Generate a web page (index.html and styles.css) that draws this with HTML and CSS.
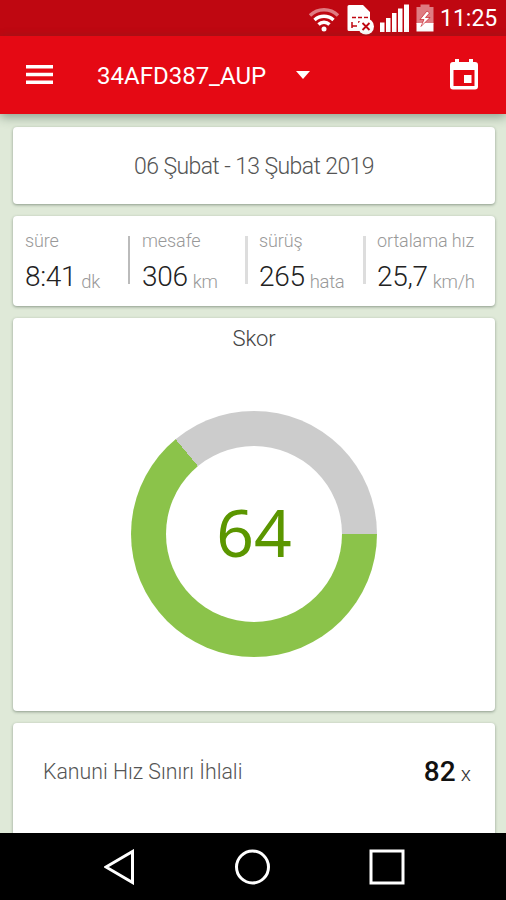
FILE: index.html
```html
<!DOCTYPE html>
<html lang="tr">
<head>
  <meta charset="UTF-8">
  <meta name="viewport" content="width=device-width, initial-scale=1.0">
  <title>Skor</title>
  <link rel="stylesheet" href="styles.css">
</head>
<body>

  <div class="status-bar">
    <svg class="status-icons" width="128" height="36" viewBox="0 0 128 36">
      <!-- wifi -->
      <g fill="none" stroke="#fff" stroke-width="3.4">
        <path d="M1 15.500a20 20 0 0 1 28 0" stroke="#df7c82"/>
        <path d="M5.500 20a14 14 0 0 1 19 0"/>
        <path d="M9.500 24.500a8 8 0 0 1 11 0"/>
      </g>
      <circle cx="15" cy="29" r="2.500" fill="#fff"/>
      <!-- sim -->
      <path d="M40 5h14l7 7v19H40a1.500 1.500 0 0 1-1.500-1.500v-23A1.500 1.500 0 0 1 40 5z" fill="#fff"/>
      <path d="M43 17.500h4M49 17.500h4M55 17.500h4M43 22v6M43 26h5M49 22h3" stroke="#bf0711" stroke-width="1.500" fill="none"/>
      <circle cx="57" cy="26.500" r="8" fill="#fff"/>
      <path d="M53.500 23l7 7M60.500 23l-7 7" stroke="#bf0711" stroke-width="1.800"/>
      <!-- signal -->
      <path d="M71 22.500h4.500V32H71zM77 18h4.500v14H77zM83 13h4.500v19H83zM89 8.500h4.500V32H89zM95 4.500h5V32h-5z" fill="#fff"/>
      <!-- battery -->
      <path d="M107.500 7h4V4.500h9V7h4v17h-17z" fill="#df7c82"/>
      <path d="M107.500 23h17v8.500h-17z" fill="#fff"/>
      <path d="M118 11l-7 8.500h4l-3 7 9-9h-4.500l4-4.500z" fill="#fff" stroke="#bf0711" stroke-width=".6"/>
    </svg>
    <span class="clock">11:25</span>
  </div>

  <header class="app-bar">
    <button class="icon-btn menu-btn" aria-label="Menü">
      <svg width="27" height="20" viewBox="0 0 27 20"><path d="M0 0h27v3.400H0zM0 7.800h27v3.400H0zM0 15.600h27V19H0z" fill="#fff"/></svg>
    </button>
    <h1>34AFD387_AUP</h1>
    <span class="caret"></span>
    <button class="icon-btn calendar-btn" aria-label="Tarih">
      <svg width="28" height="31" viewBox="0 0 28 31">
        <path fill="#fff" fill-rule="evenodd" d="M5 0h4v3h10V0h4v3h2a3 3 0 0 1 3 3v21.500a3 3 0 0 1-3 3H3a3 3 0 0 1-3-3V6a3 3 0 0 1 3-3h2zM3.500 11v16h21V11z"/>
        <path fill="#fff" d="M14 16h7.500v8H14z"/>
      </svg>
    </button>
  </header>

  <main class="content">
    <section class="card date-card">06 Şubat - 13 Şubat 2019</section>

    <section class="card stats">
      <div class="stat">
        <span class="label">süre</span>
        <div class="value"><span>8:41</span> <small>dk</small></div>
      </div>
      <div class="stat">
        <span class="label">mesafe</span>
        <div class="value"><span>306</span> <small>km</small></div>
      </div>
      <div class="stat">
        <span class="label">sürüş</span>
        <div class="value"><span>265</span> <small>hata</small></div>
      </div>
      <div class="stat">
        <span class="label">ortalama hız</span>
        <div class="value"><span>25,7</span> <small>km/h</small></div>
      </div>
    </section>

    <section class="card score-card">
      <h2>Skor</h2>
      <div class="donut">
        <div class="score">64</div>
      </div>
    </section>

    <section class="card violation">
      <span class="name">Kanuni Hız Sınırı İhlali</span>
      <span class="count"><b>82</b> x</span>
    </section>
  </main>

  <nav class="nav-bar">
    <svg width="30" height="36" viewBox="0 0 30 36"><path d="M2 18L28.500 2.500v31z" fill="none" stroke="#fff" stroke-width="3"/></svg>
    <svg width="36" height="36" viewBox="0 0 36 36"><circle cx="18.500" cy="18" r="16" fill="none" stroke="#fff" stroke-width="3"/></svg>
    <svg width="36" height="36" viewBox="0 0 36 36"><path d="M2 2h32v32H2z" fill="none" stroke="#fff" stroke-width="3"/></svg>
  </nav>

</body>
</html>
```
FILE: styles.css
```css
* {
  box-sizing: border-box;
}

body {
  display: flex;
  flex-direction: column;
  height: 900px;
  margin: 0;
  overflow: hidden;
  font-family: Roboto, sans-serif;
  background: #dfe9d8;
}

.status-bar {
  display: flex;
  align-items: center;
  justify-content: flex-end;
  height: 36px;
  padding-right: 9px;
  background: #bf0711;
  color: #fff;
}

.status-icons {
  margin-right: 3px;
}

.clock {
  width: 57px;
  font-size: 23px;
  line-height: 36px;
  padding-top: 2px;
  white-space: nowrap;
}

.app-bar {
  display: flex;
  align-items: center;
  height: 78px;
  padding: 0 28px 0 26px;
  background: #e50914;
  color: #fff;
  box-shadow: 0 3px 10px rgba(40, 70, 50, 0.45);
  z-index: 1;
}

.icon-btn {
  display: flex;
  padding: 0;
  border: none;
  background: none;
}

.app-bar h1 {
  width: 170px;
  margin: 2px 0 0 44px;
  font-size: 24px;
  font-weight: 400;
  white-space: nowrap;
}

.caret {
  margin-left: 29px;
  border: 7px solid transparent;
  border-top: 8px solid #fff;
  border-bottom: none;
}

.calendar-btn {
  margin-left: auto;
  margin-bottom: 1px;
}

.content {
  display: flex;
  flex-direction: column;
  flex: 1;
  gap: 12px;
  min-height: 0;
  padding: 13px 11px 0 13px;
  overflow: hidden;
}

.card {
  flex-shrink: 0;
  background: #fff;
  border-radius: 4px;
  box-shadow: 0 1px 3px rgba(40, 60, 45, 0.45);
}

.date-card {
  height: 77px;
  font-size: 23px;
  font-weight: 300;
  line-height: 79px;
  letter-spacing: -0.6px;
  text-align: center;
  color: #555;
}

.stats {
  display: grid;
  grid-template-columns: 117px 117px 118px 1fr;
  height: 90px;
  padding: 13px 0 0 12px;
}

.stat {
  position: relative;
  white-space: nowrap;
}

.stat + .stat::before {
  content: "";
  position: absolute;
  left: -14px;
  top: 7px;
  width: 3px;
  height: 48px;
  background: #ddd;
}

.stat:nth-child(2)::before {
  width: 2px;
  background: #bbb;
}

.label {
  display: block;
  font-size: 18px;
  font-weight: 300;
  line-height: 24px;
  letter-spacing: -0.1px;
  color: #999;
}

.value {
  display: flex;
  gap: 5px;
  margin-top: 7px;
  font-size: 28px;
  font-weight: 300;
  line-height: 34px;
  letter-spacing: -0.3px;
  color: #222;
}

.value small {
  padding-top: 5px;
  font-size: 18.5px;
  color: #999;
}

.score-card {
  display: flex;
  flex-direction: column;
  align-items: center;
  height: 393px;
}

.score-card h2 {
  margin: 7px 0 0;
  font-size: 22px;
  font-weight: 300;
  line-height: 28px;
  letter-spacing: -0.2px;
  color: #444;
}

.donut {
  display: flex;
  align-items: center;
  justify-content: center;
  width: 246px;
  height: 246px;
  margin-top: 58px;
  border-radius: 50%;
  background: conic-gradient(from 90deg, #8bc34a 64%, #ccc 0);
}

.score {
  width: 176px;
  height: 176px;
  border-radius: 50%;
  background: #fff;
  font-family: "Noto Sans", sans-serif;
  font-size: 66px;
  line-height: 171px;
  text-align: center;
  color: #5b9600;
}

.violation {
  display: flex;
  justify-content: space-between;
  height: 140px;
  padding: 0 24px 0 30px;
  line-height: 98px;
}

.name {
  font-size: 21.3px;
  font-weight: 300;
  color: #555;
}

.count {
  font-size: 21px;
  font-weight: 300;
  color: #333;
}

.count b {
  font-size: 28px;
  font-weight: 500;
  color: #111;
}

.nav-bar {
  display: flex;
  align-items: center;
  justify-content: space-between;
  height: 67px;
  padding: 0 101px 0 104px;
  background: #000;
}
```
